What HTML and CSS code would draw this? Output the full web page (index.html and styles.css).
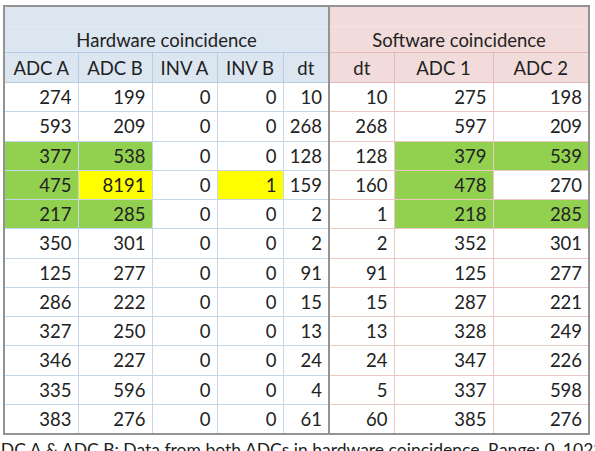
FILE: index.html
```html
<!DOCTYPE html>
<html>
<head>
<meta charset="utf-8">
<link rel="stylesheet" href="styles.css">
</head>
<body>
<div class="page">
<table class="grid">
<colgroup>
<col class="c-adc"><col class="c-adc"><col class="c-inv"><col class="c-invb"><col class="c-dt"><col class="c-dts"><col class="c-adc1"><col class="c-adc2">
</colgroup>
<thead>
<tr class="band"><th colspan="5" class="hw"></th><th colspan="3" class="sw sep"></th></tr>
<tr class="group"><th colspan="5" class="hw">Hardware coincidence</th><th colspan="3" class="sw sep">Software coincidence</th></tr>
<tr class="cols"><th class="hw">ADC A</th><th class="hw">ADC B</th><th class="hw">INV A</th><th class="hw">INV B</th><th class="hw">dt</th><th class="sw sep">dt</th><th class="sw">ADC 1</th><th class="sw">ADC 2</th></tr>
</thead>
<tbody>
<tr><td>274</td><td>199</td><td>0</td><td>0</td><td>10</td><td class="s sep">10</td><td class="s">275</td><td class="s">198</td></tr>
<tr><td>593</td><td>209</td><td>0</td><td>0</td><td>268</td><td class="s sep">268</td><td class="s">597</td><td class="s">209</td></tr>
<tr><td class="g">377</td><td class="g">538</td><td>0</td><td>0</td><td>128</td><td class="s sep">128</td><td class="s g">379</td><td class="s g">539</td></tr>
<tr><td class="g">475</td><td class="y">8191</td><td>0</td><td class="y">1</td><td>159</td><td class="s sep">160</td><td class="s g">478</td><td class="s">270</td></tr>
<tr><td class="g">217</td><td class="g">285</td><td>0</td><td>0</td><td>2</td><td class="s sep">1</td><td class="s g">218</td><td class="s g">285</td></tr>
<tr><td>350</td><td>301</td><td>0</td><td>0</td><td>2</td><td class="s sep">2</td><td class="s">352</td><td class="s">301</td></tr>
<tr><td>125</td><td>277</td><td>0</td><td>0</td><td>91</td><td class="s sep">91</td><td class="s">125</td><td class="s">277</td></tr>
<tr><td>286</td><td>222</td><td>0</td><td>0</td><td>15</td><td class="s sep">15</td><td class="s">287</td><td class="s">221</td></tr>
<tr><td>327</td><td>250</td><td>0</td><td>0</td><td>13</td><td class="s sep">13</td><td class="s">328</td><td class="s">249</td></tr>
<tr><td>346</td><td>227</td><td>0</td><td>0</td><td>24</td><td class="s sep">24</td><td class="s">347</td><td class="s">226</td></tr>
<tr><td>335</td><td>596</td><td>0</td><td>0</td><td>4</td><td class="s sep">5</td><td class="s">337</td><td class="s">598</td></tr>
<tr><td>383</td><td>276</td><td>0</td><td>0</td><td>61</td><td class="s sep">60</td><td class="s">385</td><td class="s">276</td></tr>
</tbody>
</table>
<p class="caption">ADC A &amp; ADC B: Data from both ADCs in hardware coincidence. Range: 0..1023</p>
</div>
</body>
</html>
```
FILE: styles.css
```css
html, body {
  margin: 0;
  padding: 0;
  background: #ffffff;
  overflow: hidden;
}
body {
  font-family: Lato, "Liberation Sans", sans-serif;
  color: #222222;
  font-size: 18.5px;
}
.page {
  width: 595px;
  height: 451px;
  overflow: hidden;
  padding: 5px 0 0 3px;
  box-sizing: border-box;
}
.grid {
  border-collapse: collapse;
  table-layout: fixed;
  width: 587px;
  border: 2px solid #939393;
}
.c-adc { width: 74px; }
.c-inv { width: 65px; }
.c-invb { width: 66px; }
.c-dt { width: 46px; }
.c-dts { width: 65px; }
.c-adc1 { width: 99px; }
.c-adc2 { width: 96px; }

th {
  font-weight: normal;
  padding: 0;
  text-align: center;
  white-space: nowrap;
}
th.hw {
  background: #dce6f1;
  border: 1px solid #b8cce4;
}
th.sw {
  background: #f2dcdb;
  border: 1px solid #e6b8b7;
}
.band th { height: 19px; border-bottom-color: #e3ebf5; }
.band th.sw { border-bottom-color: #f5e4e3; }
.band th, .group th { border-top: none; }
.group th { height: 25px; }
.cols th { height: 29px; }

td {
  height: 28.25px;
  padding: 0 6px 0 0;
  text-align: right;
  border: 1px solid #c5d7ed;
  white-space: nowrap;
}
td.s {
  border-color: #ecc6c5;
}
.sep,
th.sep,
td.sep {
  border-left: 2px solid #939393;
}
td.g { background: #92d050; }
td.y { background: #ffff00; }

.caption {
  margin: 4px 0 0 -14px;
  white-space: nowrap;
  line-height: 22px;
  font-size: 17.5px;
}
```
